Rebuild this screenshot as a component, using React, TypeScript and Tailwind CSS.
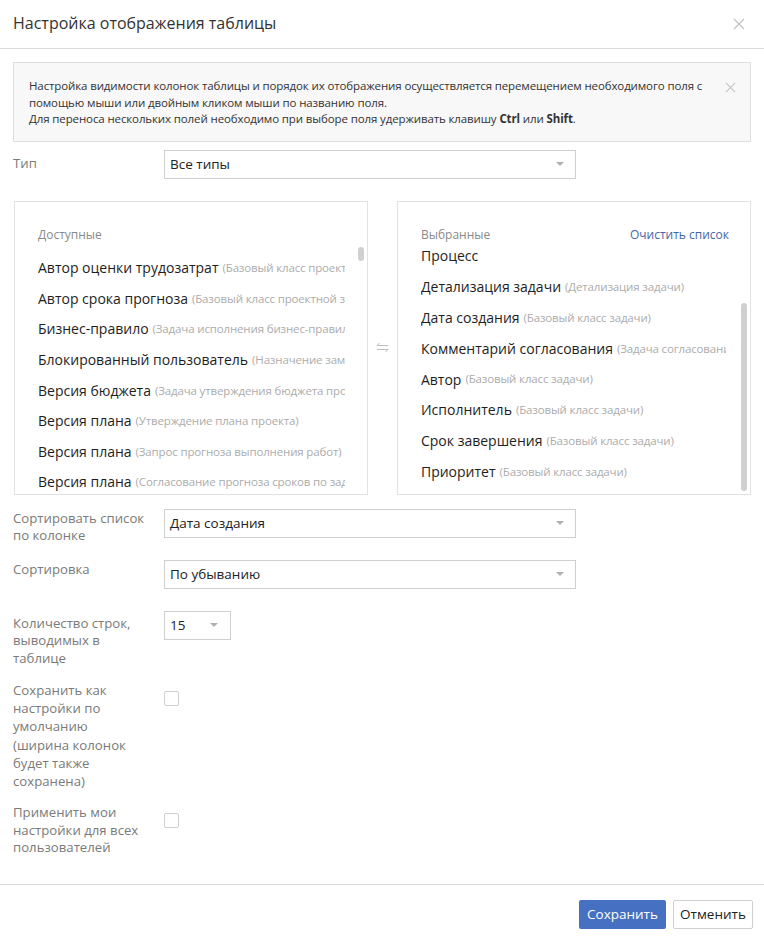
import { ReactNode } from 'react';

type Field = { name: string; hint?: string };

const available: Field[] = [
  { name: 'Автор оценки трудозатрат', hint: '(Базовый класс проектной задачи)' },
  { name: 'Автор срока прогноза', hint: '(Базовый класс проектной задачи)' },
  { name: 'Бизнес-правило', hint: '(Задача исполнения бизнес-правила)' },
  { name: 'Блокированный пользователь', hint: '(Назначение заместителя)' },
  { name: 'Версия бюджета', hint: '(Задача утверждения бюджета проекта)' },
  { name: 'Версия плана', hint: '(Утверждение плана проекта)' },
  { name: 'Версия плана', hint: '(Запрос прогноза выполнения работ)' },
  { name: 'Версия плана', hint: '(Согласование прогноза сроков по задаче)' },
];

const selected: Field[] = [
  { name: 'Процесс' },
  { name: 'Детализация задачи', hint: '(Детализация задачи)' },
  { name: 'Дата создания', hint: '(Базовый класс задачи)' },
  { name: 'Комментарий согласования', hint: '(Задача согласования)' },
  { name: 'Автор', hint: '(Базовый класс задачи)' },
  { name: 'Исполнитель', hint: '(Базовый класс задачи)' },
  { name: 'Срок завершения', hint: '(Базовый класс задачи)' },
  { name: 'Приоритет', hint: '(Базовый класс задачи)' },
];

function CloseIcon({ size = 12 }: { size?: number }) {
  return (
    <svg width={size} height={size} viewBox="0 0 12 12" fill="none" stroke="#c4c4c4" strokeWidth="1.2">
      <path d="M1 1 L11 11 M11 1 L1 11" />
    </svg>
  );
}

function Caret() {
  return <span className="w-0 h-0 border-l-[4px] border-r-[4px] border-t-[4px] border-l-transparent border-r-transparent border-t-[#b0b0b0]" />;
}

function Select({ value, className }: { value: string; className: string }) {
  return (
    <div className={`h-[29px] border border-[#cfcfcf] bg-white flex items-center justify-between pl-[5px] pr-[11px] text-[13.5px] text-[#222] ${className}`}>
      <span>{value}</span>
      <Caret />
    </div>
  );
}

function Row({ label, children, labelClass = '', className = '' }: { label: ReactNode; children: ReactNode; labelClass?: string; className?: string }) {
  return (
    <div className={`flex items-start ${className}`}>
      <div className={`w-[151px] shrink-0 text-[13.2px] leading-[17.5px] text-[#7a7a7a] ${labelClass}`}>{label}</div>
      {children}
    </div>
  );
}

function FieldItem({ f, h }: { f: Field; h: string }) {
  return (
    <div className={`${h} flex items-center whitespace-nowrap overflow-hidden`}>
      <span className="text-[14px] text-[#1e1e1e]">{f.name}</span>
      {f.hint && <span className="ml-[4px] text-[11.5px] tracking-[-0.15px] text-[#acacac]">{f.hint}</span>}
    </div>
  );
}

function Checkbox() {
  return <div className="w-[15px] h-[15px] border border-[#cfcfcf] rounded-[2px] bg-white" />;
}

export default function App() {
  return (
    <div className="w-[764px] h-[942px] bg-white flex flex-col font-['Open_Sans',sans-serif] text-[#333]">
      <div className="h-[49px] shrink-0 border-b border-[#dcdcdc] flex items-center justify-between pl-[13px] pr-[19px]">
        <h1 className="text-[16px] text-[#333] pb-[3px]">Настройка отображения таблицы</h1>
        <CloseIcon />
      </div>

      <div className="flex-1 px-[13px] pt-[13px]">
        <div className="border border-[#dedede] bg-[#f8f8f8] flex items-start pl-[15px] pr-[14px] pt-[15px] pb-[13px]">
          <div className="flex-1 text-[11.5px] leading-[16.5px] tracking-[-0.12px] text-[#333]">
            Настройка видимости колонок таблицы и порядок их отображения осуществляется перемещением необходимого поля с помощью мыши или двойным кликом мыши по названию поля.
            <br />
            Для переноса нескольких полей необходимо при выборе поля удерживать клавишу <b>Ctrl</b> или <b>Shift</b>.
          </div>
          <div className="ml-[14px] mt-[4px]">
            <CloseIcon size={11} />
          </div>
        </div>

        <Row label="Тип" labelClass="pt-[5px]" className="mt-[8px]">
          <Select value="Все типы" className="w-[412px]" />
        </Row>

        <div className="mt-[22px] ml-[1px] flex h-[294px]">
          <div className="relative w-[355px] border border-[#e2e2e2] pl-[23px] pr-[22px] pt-[24px] overflow-hidden">
            <div className="text-[12px] leading-[17px] text-[#8a8a8a]">Доступные</div>
            <div className="mt-[10px]">
              {available.map((f, i) => (
                <FieldItem key={i} f={f} h="h-[30.6px]" />
              ))}
            </div>
            <div className="absolute right-[3px] top-[45px] w-[6px] h-[14px] rounded-full bg-[#d0d0d0]" />
          </div>

          <div className="w-[29px] flex items-center justify-center">
            <svg width="13" height="11" viewBox="0 0 13 11" fill="none" stroke="#bdbdbd" strokeWidth="1">
              <path d="M1 3.5 H12 M1 3.5 L3.5 1 M12 7.5 H1 M12 7.5 L9.5 10" />
            </svg>
          </div>

          <div className="relative w-[355px] border border-[#e2e2e2] pl-[23px] pr-[21px] pt-[24px] overflow-hidden">
            <div className="flex items-center justify-between text-[12px] leading-[17px]">
              <span className="text-[#8a8a8a]">Выбранные</span>
              <span className="text-[#4466a8]">Очистить список</span>
            </div>
            <div className="mt-[-2px] pr-[3px]">
              {selected.map((f, i) => (
                <FieldItem key={i} f={f} h="h-[30.8px]" />
              ))}
            </div>
            <div className="absolute right-[3px] top-[101px] w-[6px] h-[188px] rounded-full bg-[#d0d0d0]" />
          </div>
        </div>

        <Row label={<>Сортировать список<br />по колонке</>} labelClass="pt-[1px]" className="mt-[14px]">
          <Select value="Дата создания" className="w-[412px]" />
        </Row>

        <Row label="Сортировка" labelClass="pt-[1px]" className="mt-[15px]">
          <Select value="По убыванию" className="w-[412px]" />
        </Row>

        <Row label={<>Количество строк,<br />выводимых в<br />таблице</>} labelClass="pt-[4px]" className="mt-[22px]">
          <div className="w-[67px] h-[29px] border border-[#cfcfcf] flex items-center justify-between pl-[5px] pr-[12px] text-[13.5px] text-[#222]">
            <span>15</span>
            <Caret />
          </div>
        </Row>

        <Row label={<>Сохранить как<br />настройки по<br />умолчанию<br />(ширина колонок<br />будет также<br />сохранена)</>} labelClass="leading-[18.2px]" className="mt-[14px]">
          <div className="pt-[10px]">
            <Checkbox />
          </div>
        </Row>

        <Row label={<>Применить мои<br />настройки для всех<br />пользователей</>} className="mt-[14px]">
          <div className="pt-[9px]">
            <Checkbox />
          </div>
        </Row>
      </div>

      <div className="shrink-0 border-t border-[#dcdcdc] flex justify-end gap-[7px] pt-[15px] pb-[13px] pr-[11px]">
        <button className="h-[29px] w-[87px] rounded-[2px] bg-[#4670c2] text-white text-[13.5px]">Сохранить</button>
        <button className="h-[29px] w-[80px] rounded-[2px] border border-[#cfcfcf] bg-white text-[#222] text-[13.5px]">Отменить</button>
      </div>
    </div>
  );
}
